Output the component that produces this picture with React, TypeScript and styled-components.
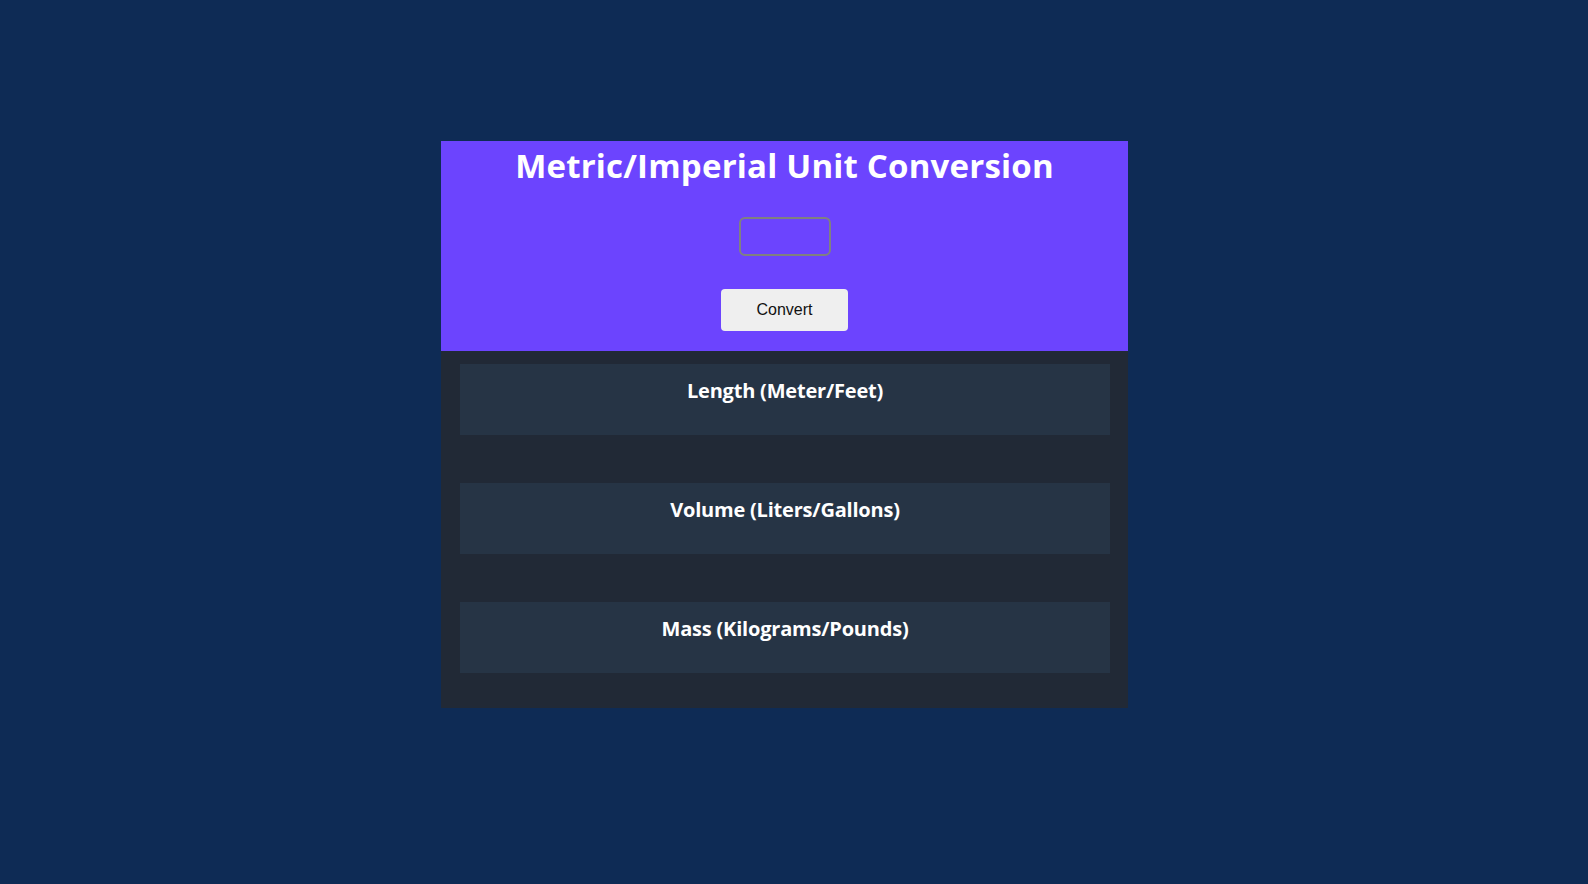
import React, { useState } from "react";
import styled, { createGlobalStyle } from "styled-components";

const GlobalStyle = createGlobalStyle`
  * {
    box-sizing: border-box;
  }

  body {
    margin: 0;
    background: #0e2b55;
    font-family: "Open Sans", Lato, sans-serif;
  }
`;

export const Page = styled.div`
  min-height: 100vh;
  display: flex;
  justify-content: center;
  align-items: flex-start;
  padding: 141px 19px 0 0;
`;

export const Card = styled.div`
  width: 687px;
  background: #212936;
`;

export const Header = styled.header`
  background: #6c44fe;
  display: flex;
  flex-direction: column;
  align-items: center;
  gap: 33px;
  padding: 6px 0 20px;
`;

export const Title = styled.h1`
  margin: 0;
  font-size: 33px;
  line-height: 37px;
  font-weight: 700;
  letter-spacing: 0.2px;
  color: #ffffff;
`;

export const Input = styled.input`
  width: 92px;
  height: 39px;
  border: 2px solid #808080;
  border-radius: 6px;
  background: transparent;
  color: #ffffff;
  font-size: 16px;
  padding: 0 8px;
  text-align: center;

  &:focus {
    outline: 0;
  }
`;

export const Button = styled.button`
  width: 127px;
  height: 42px;
  border: none;
  border-radius: 4px;
  background: #efefef;
  color: #111111;
  font-family: "Liberation Sans", Arial, sans-serif;
  font-size: 16px;
  cursor: pointer;
`;

export const Results = styled.div`
  display: flex;
  flex-direction: column;
  gap: 48.5px;
  padding: 13px 18px 35px 19px;
`;

export const ResultBox = styled.section`
  height: 70.5px;
  background: #263445;
  padding-top: 15px;
  text-align: center;
`;

export const ResultTitle = styled.h3`
  margin: 0;
  font-size: 20px;
  line-height: 24px;
  font-weight: 700;
  letter-spacing: -0.2px;
  color: #ffffff;
`;

export const ResultText = styled.p`
  margin: 4px 0 0;
  font-size: 15px;
  color: #ffffff;
`;

const categories = [
  "Length (Meter/Feet)",
  "Volume (Liters/Gallons)",
  "Mass (Kilograms/Pounds)",
];

export default function App() {
  const [value, setValue] = useState("");
  const [shown, setShown] = useState<number | null>(null);

  const convert = () => {
    const n = parseFloat(value);
    setShown(isNaN(n) ? null : n);
  };

  const lines = (n: number) => [
    `${n} meters = ${(n * 3.281).toFixed(3)} feet | ${n} feet = ${(n / 3.281).toFixed(3)} meters`,
    `${n} liters = ${(n * 0.264).toFixed(3)} gallons | ${n} gallons = ${(n / 0.264).toFixed(3)} liters`,
    `${n} kilos = ${(n * 2.204).toFixed(3)} pounds | ${n} pounds = ${(n / 2.204).toFixed(3)} kilos`,
  ];

  return (
    <>
      <GlobalStyle />
      <Page>
        <Card>
          <Header>
            <Title>Metric/Imperial Unit Conversion</Title>
            <Input
              type="number"
              value={value}
              onChange={(e) => setValue(e.target.value)}
            />
            <Button onClick={convert}>Convert</Button>
          </Header>
          <Results>
            {categories.map((c, i) => (
              <ResultBox key={c}>
                <ResultTitle>{c}</ResultTitle>
                {shown !== null && <ResultText>{lines(shown)[i]}</ResultText>}
              </ResultBox>
            ))}
          </Results>
        </Card>
      </Page>
    </>
  );
}
